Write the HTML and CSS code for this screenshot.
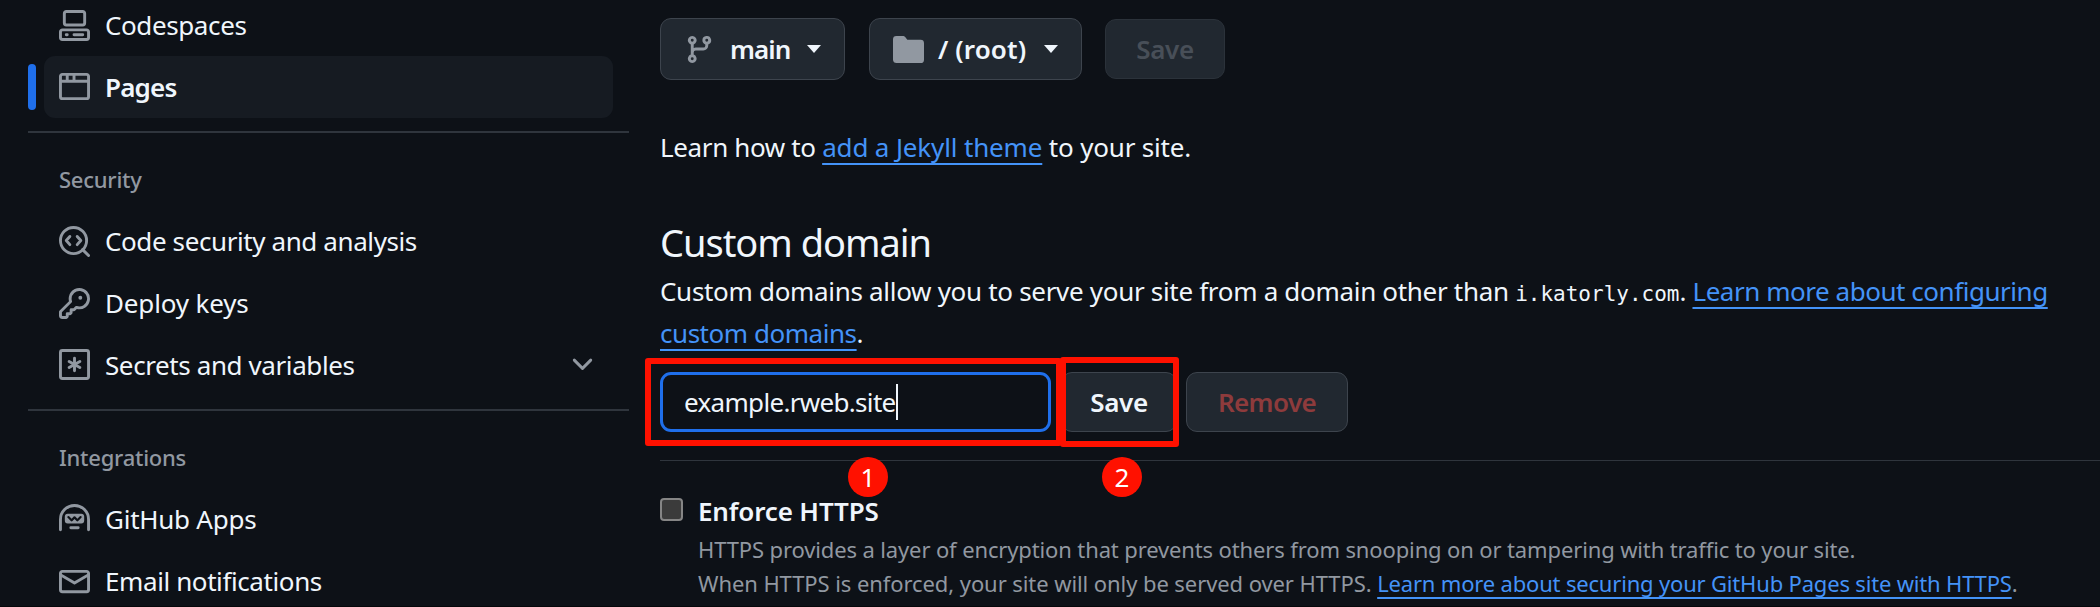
FILE: index.html
```
<!DOCTYPE html>
<html lang="en">
<head>
<meta charset="utf-8">
<title>Pages settings</title>
<link rel="stylesheet" href="styles.css">
</head>
<body>
<div class="page">
  <nav class="sidebar">
    <a class="item"><svg class="icon" viewBox="0 0 16 16"><path d="M0 11.25c0-.966.784-1.75 1.75-1.75h12.5c.966 0 1.75.784 1.75 1.75v3A1.75 1.75 0 0 1 14.25 16H1.75A1.75 1.75 0 0 1 0 14.250Zm2-9.500C2 .784 2.784 0 3.750 0h8.500C13.216 0 14 .784 14 1.750v5a1.750 1.750 0 0 1-1.750 1.750h-8.500A1.750 1.750 0 0 1 2 6.750Zm1.750-.250a.250.250 0 0 0-.250.250v5c0 .138.112.250.250.250h8.500a.250.250 0 0 0 .250-.250v-5a.250.250 0 0 0-.250-.250Zm-2 9.500a.250.250 0 0 0-.250.250v3c0 .138.112.250.250.250h12.500a.250.250 0 0 0 .250-.250v-3a.250.250 0 0 0-.250-.250Z"/><path d="M7 12.750a.750.750 0 0 1 .750-.750h4.500a.750.750 0 0 1 0 1.500h-4.500a.750.750 0 0 1-.750-.750Zm-4 0a.750.750 0 0 1 .750-.750h.500a.750.750 0 0 1 0 1.500h-.500a.750.750 0 0 1-.750-.750Z"/></svg><span class="t-codespaces">Codespaces</span></a>
    <a class="item current"><svg class="icon" viewBox="0 0 16 16"><path d="M0 2.750C0 1.784.784 1 1.750 1h12.500c.966 0 1.750.784 1.750 1.750v10.500A1.750 1.750 0 0 1 14.250 15H1.750A1.750 1.750 0 0 1 0 13.250ZM14.500 6h-13v7.250c0 .138.112.250.250.250h12.500a.250.250 0 0 0 .250-.250Zm-6-3.500v2h6V2.750a.250.250 0 0 0-.250-.250ZM5 2.500v2h2v-2Zm-3.250 0a.250.250 0 0 0-.250.250V4.500h2v-2Z"/></svg><span class="t-pages">Pages</span></a>
    <div class="divider"></div>
    <h3 class="group">Security</h3>
    <a class="item"><svg class="icon" viewBox="0 0 16 16"><path d="M5.600 5.400 3.750 7.500 5.600 9.600M9.400 5.400 11.250 7.500 9.400 9.600" class="line"/><circle cx="7.500" cy="7.500" r="6.750" class="line"/><path d="M12.200 12.200 15.250 15.250" class="line"/></svg><span class="t-code">Code security and analysis</span></a>
    <a class="item"><svg class="icon" viewBox="0 0 16 16"><path d="M10.500 0a5.499 5.499 0 1 1-1.288 10.848l-.932.932a.749.749 0 0 1-.530.220H7v.750a.749.749 0 0 1-.220.530l-.500.500a.749.749 0 0 1-.530.220H5v.750a.749.749 0 0 1-.220.530l-.500.500a.749.749 0 0 1-.530.220h-2A1.750 1.750 0 0 1 0 14.250v-2c0-.199.079-.389.220-.530l4.932-4.932A5.500 5.500 0 0 1 10.500 0Zm-4 5.500c-.001.431.069.860.205 1.269a.750.750 0 0 1-.181.768L1.500 12.560v1.690c0 .138.112.250.250.250h1.690l.060-.060v-1.190a.750.750 0 0 1 .750-.750h1.190l.060-.060v-1.190a.750.750 0 0 1 .750-.750h1.190l1.023-1.025a.750.750 0 0 1 .768-.180A4 4 0 1 0 6.500 5.500ZM11 6a1 1 0 1 1 0-2 1 1 0 0 1 0 2Z"/></svg><span class="t-deploy">Deploy keys</span></a>
    <a class="item"><svg class="icon" viewBox="0 0 16 16"><rect x=".75" y=".75" width="14.500" height="14.500" rx="1" class="line"/><path d="M8 4.800v6.400M5.230 6.400l5.540 3.200M5.230 9.600l5.540-3.200" class="line"/></svg><span class="t-secrets">Secrets and variables</span><svg class="icon chevron" viewBox="0 0 16 16"><path d="M12.780 5.220a.749.749 0 0 1 0 1.060l-4.250 4.250a.749.749 0 0 1-1.060 0L3.220 6.280a.749.749 0 1 1 1.060-1.060L8 8.939l3.720-3.719a.749.749 0 0 1 1.060 0Z"/></svg></a>
    <div class="divider"></div>
    <h3 class="group">Integrations</h3>
    <a class="item"><svg class="icon" viewBox="0 0 16 16"><path fill-rule="evenodd" d="M4.500 5h7A1.500 1.500 0 0 1 13 6.500v2A1.500 1.500 0 0 1 11.500 10h-7A1.500 1.500 0 0 1 3 8.500v-2A1.500 1.500 0 0 1 4.500 5Zm.350 1.200a.550.550 0 0 0-.400.950L6.100 8.800a.600.600 0 0 0 .850 0L8 7.750 9.050 8.800a.600.600 0 0 0 .850 0l1.650-1.650a.550.550 0 0 0-.780-.780L9.480 7.600 8.400 6.500a.600.600 0 0 0-.800 0L6.520 7.600 5.230 6.370a.550.550 0 0 0-.380-.170Z"/><path d="M.75 13.250V8a7.250 7.250 0 0 1 14.500 0v5.250M6.100 12.250h3.800" class="line"/></svg><span class="t-apps">GitHub Apps</span></a>
    <a class="item"><svg class="icon" viewBox="0 0 16 16"><path d="M1.750 2h12.500c.966 0 1.750.784 1.750 1.750v8.500A1.750 1.750 0 0 1 14.250 14H1.750A1.750 1.750 0 0 1 0 12.250v-8.500C0 2.784.784 2 1.750 2ZM1.500 12.251c0 .138.112.250.250.250h12.500a.250.250 0 0 0 .250-.250V5.809L8.380 9.397a.750.750 0 0 1-.760 0L1.500 5.809v6.442Zm13-8.181v-.320a.250.250 0 0 0-.250-.250H1.750a.250.250 0 0 0-.250.250v.320L8 7.880Z"/></svg><span class="t-email">Email notifications</span></a>
  </nav>
  <main class="main">
    <div class="source">
      <button class="btn branch"><svg class="icon" viewBox="0 0 16 16"><path d="M9.500 3.250a2.250 2.250 0 1 1 3 2.122V6A2.500 2.500 0 0 1 10 8.500H6a1 1 0 0 0-1 1v1.128a2.251 2.251 0 1 1-1.500 0V5.372a2.250 2.250 0 1 1 1.500 0v1.836A2.493 2.493 0 0 1 6 7h4a1 1 0 0 0 1-1v-.628A2.250 2.250 0 0 1 9.500 3.250Zm-6 0a.750.750 0 1 0 1.500 0 .750.750 0 0 0-1.500 0Zm8.250-.750a.750.750 0 1 0 0 1.500.750.750 0 0 0 0-1.500ZM4.250 12a.750.750 0 1 0 0 1.500.750.750 0 0 0 0-1.500Z"/></svg><span class="t-main">main</span><i class="caret"></i></button>
      <button class="btn folder"><svg class="icon" viewBox="0 0 16 16"><path d="M1.750 1A1.750 1.750 0 0 0 0 2.750v10.500C0 14.216.784 15 1.750 15h12.500A1.750 1.750 0 0 0 16 13.250v-8.500A1.750 1.750 0 0 0 14.250 3H7.500a.250.250 0 0 1-.200-.100l-.900-1.200C6.070 1.260 5.550 1 5 1H1.750Z"/></svg><span class="t-root">/ (root)</span><i class="caret"></i></button>
      <button class="btn save-off"><span class="t-save">Save</span></button>
    </div>
    <p class="learn"><span class="t-learn1">Learn how to </span><a class="link t-learn2">add a Jekyll theme</a><span class="t-learn3"> to your site.</span></p>
    <h2 class="title">Custom domain</h2>
    <p class="desc"><span class="t-desc1">Custom domains allow you to serve your site from a domain other than </span><code>i.katorly.com</code>. <a class="link t-desc2">Learn more about configuring<br>custom domains</a>.</p>
    <div class="form">
      <div class="field"><span class="t-input">example.rweb.site</span><i class="cursor"></i><div class="mark mark-one"></div><b class="badge badge-one">1</b></div>
      <button class="btn save"><span class="t-save">Save</span></button>
      <button class="btn remove"><span class="t-remove">Remove</span></button>
      <div class="mark mark-two"></div><b class="badge badge-two">2</b>
    </div>
    <div class="rule"></div>
    <div class="https">
      <span class="check"></span>
      <div>
        <div class="enforce">Enforce HTTPS</div>
        <p class="note"><span class="t-note1">HTTPS provides a layer of encryption that prevents others from snooping on or tampering with traffic to your site.</span><br><span class="t-note2">When HTTPS is enforced, your site will only be served over HTTPS. </span><a class="link t-note3">Learn more about securing your GitHub Pages site with HTTPS</a>.</p>
      </div>
    </div>
  </main>
</div>
</body>
</html>
```
FILE: styles.css
```
* { box-sizing: border-box; }
body { margin: 0; background: #0d1117; color: #f0f6fc; font: 26px/42px "Noto Sans", "Open Sans", sans-serif; overflow: hidden; }
h2, h3, p { margin: 0; font-weight: 400; }
span { white-space: pre; }
.page { display: flex; height: 607px; overflow: hidden; border-bottom: 1px solid #05070a; }
.sidebar { width: 601px; margin-left: 28px; flex: none; margin-top: -5.67px; }
.item { display: flex; align-items: center; height: 61.67px; margin: 0 16px; padding-left: 15px; border-radius: 11px; position: relative; letter-spacing: -.4px; }
.item span { margin-left: 15px; }
.current { background: #161b22; font-weight: 600; letter-spacing: -.8px; }
.current::before { content: ""; position: absolute; left: -16px; top: 8px; width: 8px; height: 46px; border-radius: 4px; background: #1f6feb; }
.icon { width: 31px; height: 31px; flex: none; fill: #9198a1; }
.line { fill: none; stroke: #9198a1; stroke-width: 1.5; stroke-linecap: round; stroke-linejoin: round; }
.chevron { margin: 0 15px 0 auto; }
.divider { height: 2px; background: #2f353d; margin: 13.3px 0 0; }
.group { font-size: 22px; line-height: 34px; font-weight: 500; color: #9198a1; padding-left: 31px; margin: 29px 0 14.7px; letter-spacing: -.25px; }
.main { flex: 1; margin-left: 31px; padding-top: 18px; }
.source { display: flex; align-items: center; height: 62px; }
.btn { display: flex; align-items: center; height: 60px; border: 1px solid #3d444d; border-radius: 11px; background: #212830; color: #f0f6fc; font: 600 26px/42px "Noto Sans", sans-serif; padding: 0; }
.caret { border: 7px solid transparent; border-top: 8px solid #f0f6fc; border-bottom: 0; }
.branch { width: 185px; height: 62px; padding-left: 23px; margin-right: 24px; }
.branch span { margin: 0 16px 0 15px; }
.folder { width: 213px; height: 62px; padding-left: 23px; margin-right: 23px; }
.folder span { margin: 0 18px 0 14px; }
.save-off { width: 120px; justify-content: center; color: #484f58; border-color: #2b323a; }
.learn { margin-top: 46px; }
.link { color: #4493f8; text-decoration: underline 2px; text-underline-offset: 6px; text-decoration-skip-ink: none; }
.title { font-size: 38px; line-height: 58px; margin-top: 45px; letter-spacing: -1.02px; }
.desc { margin-top: -1px; letter-spacing: -.4px; white-space: nowrap; }
code { font: 21px/1 "DejaVu Sans Mono", monospace; letter-spacing: 0; }
.form { display: flex; position: relative; margin-top: 18px; height: 60px; }
.field { position: relative; width: 391px; border: 3px solid #1f6feb; border-radius: 11px; display: flex; align-items: center; padding-left: 21px; }
.cursor { width: 2px; height: 36px; background: #f0f6fc; }
.save { width: 116px; margin-left: 10px; justify-content: center; }
.remove { width: 162px; margin-left: 9px; justify-content: center; color: #8e3b3c; }
.mark { position: absolute; border: 6px solid #ff1100; border-radius: 3px; }
.mark-one { left: -18px; top: -17px; width: 417px; height: 88px; }
.mark-two { left: 400px; top: -15px; width: 119px; height: 90px; }
.badge { position: absolute; width: 40px; height: 40px; border-radius: 50%; background: #ff1100; color: #fff; font-weight: 400; line-height: 40px; text-align: center; z-index: 2; }
.badge-one { left: 185px; top: 82px; }
.badge-two { left: 442px; top: 85px; }
.rule { height: 1px; background: #2f353d; margin-top: 28px; }
.https { display: flex; margin-top: 29px; }
.check { width: 23px; height: 23px; border: 2px solid #858585; border-radius: 4px; background: #3b3b3b; margin: 8px 15px 0 0; }
.enforce { font-weight: 600; height: 42px; letter-spacing: -.15px; }
.note { font-size: 22px; line-height: 34px; color: #9198a1; white-space: nowrap; }
.note .link { text-underline-offset: 5px; }

/* Tracking per text run */
.t-deploy { letter-spacing: -.15px; }
.t-apps { letter-spacing: -.25px; }
.t-main { letter-spacing: -.9px; }
.t-root { letter-spacing: .1px; }
.t-save { letter-spacing: -.3px; }
.t-remove { letter-spacing: -.6px; }
.t-learn1 { letter-spacing: -.36px; }
.t-learn2 { letter-spacing: -.15px; }
.t-learn3 { letter-spacing: -.19px; }
.t-desc1 { letter-spacing: -.31px; }
.t-desc2 { letter-spacing: -.46px; }
.t-input { letter-spacing: -.68px; }
.t-note1 { letter-spacing: -.13px; }
.t-note2 { letter-spacing: -.08px; }
.t-note3 { letter-spacing: -.18px; }
```
